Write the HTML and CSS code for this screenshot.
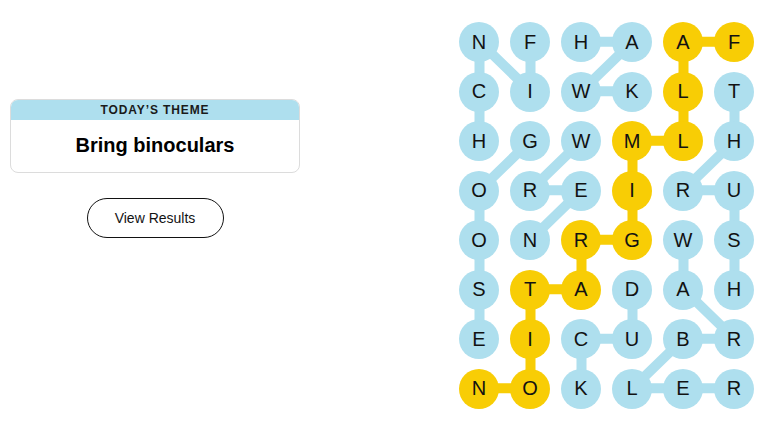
FILE: index.html
```html
<!DOCTYPE html>
<html lang="en">
<head>
<meta charset="utf-8">
<title>Strands</title>
<link rel="stylesheet" href="styles.css">
</head>
<body>
<main class="page">
  <section class="side">
    <div class="theme-card">
      <div class="theme-label">TODAY’S THEME</div>
      <div class="theme-title">Bring binoculars</div>
    </div>
    <button class="results-btn">View Results</button>
  </section>
  <section class="board">
    <svg class="links" width="306" height="396" viewBox="0 0 306 396">
      <g class="found">
        <polyline points="76.5,24.75 76.5,74.25 25.5,24.75 25.5,74.25 25.5,123.75"/>
        <polyline points="127.5,24.75 178.5,24.75 127.5,74.25 178.5,74.25"/>
        <polyline points="280.5,74.25 280.5,123.75 229.5,173.25 280.5,173.25 280.5,222.75 280.5,272.25"/>
        <polyline points="127.5,123.75 76.5,173.25 127.5,173.25 76.5,222.75"/>
        <polyline points="76.5,123.75 25.5,173.25 25.5,222.75 25.5,272.25 25.5,321.75"/>
        <polyline points="178.5,272.25 178.5,321.75 127.5,321.75 127.5,371.25"/>
        <polyline points="229.5,222.75 229.5,272.25 280.5,321.75 229.5,321.75 178.5,371.25 229.5,371.25 280.5,371.25"/>
      </g>
      <g class="span">
        <polyline points="280.5,24.75 229.5,24.75 229.5,74.25 229.5,123.75 178.5,123.75 178.5,173.25 178.5,222.75 127.5,222.75 127.5,272.25 76.5,272.25 76.5,321.75 76.5,371.25 25.5,371.25"/>
      </g>
    </svg>
    <div class="grid">
      <div class="cell"><span>N</span></div>
      <div class="cell"><span>F</span></div>
      <div class="cell"><span>H</span></div>
      <div class="cell"><span>A</span></div>
      <div class="cell gold"><span>A</span></div>
      <div class="cell gold"><span>F</span></div>

      <div class="cell"><span>C</span></div>
      <div class="cell"><span>I</span></div>
      <div class="cell"><span>W</span></div>
      <div class="cell"><span>K</span></div>
      <div class="cell gold"><span>L</span></div>
      <div class="cell"><span>T</span></div>

      <div class="cell"><span>H</span></div>
      <div class="cell"><span>G</span></div>
      <div class="cell"><span>W</span></div>
      <div class="cell gold"><span>M</span></div>
      <div class="cell gold"><span>L</span></div>
      <div class="cell"><span>H</span></div>

      <div class="cell"><span>O</span></div>
      <div class="cell"><span>R</span></div>
      <div class="cell"><span>E</span></div>
      <div class="cell gold"><span>I</span></div>
      <div class="cell"><span>R</span></div>
      <div class="cell"><span>U</span></div>

      <div class="cell"><span>O</span></div>
      <div class="cell"><span>N</span></div>
      <div class="cell gold"><span>R</span></div>
      <div class="cell gold"><span>G</span></div>
      <div class="cell"><span>W</span></div>
      <div class="cell"><span>S</span></div>

      <div class="cell"><span>S</span></div>
      <div class="cell gold"><span>T</span></div>
      <div class="cell gold"><span>A</span></div>
      <div class="cell"><span>D</span></div>
      <div class="cell"><span>A</span></div>
      <div class="cell"><span>H</span></div>

      <div class="cell"><span>E</span></div>
      <div class="cell gold"><span>I</span></div>
      <div class="cell"><span>C</span></div>
      <div class="cell"><span>U</span></div>
      <div class="cell"><span>B</span></div>
      <div class="cell"><span>R</span></div>

      <div class="cell gold"><span>N</span></div>
      <div class="cell gold"><span>O</span></div>
      <div class="cell"><span>K</span></div>
      <div class="cell"><span>L</span></div>
      <div class="cell"><span>E</span></div>
      <div class="cell"><span>R</span></div>
    </div>
  </section>
</main>
</body>
</html>
```
FILE: styles.css
```css
html, body {
  margin: 0;
  padding: 0;
  background: #ffffff;
}

body {
  font-family: "Liberation Sans", Arial, sans-serif;
  color: #000000;
}

.page {
  display: flex;
  align-items: flex-start;
  width: 768px;
  height: 432px;
  overflow: hidden;
}

.side {
  width: 290px;
  padding: 99px 0 0 10px;
  display: flex;
  flex-direction: column;
  align-items: center;
}

.theme-card {
  width: 290px;
  box-sizing: border-box;
  border: 1px solid #dcdcdc;
  border-radius: 8px;
  overflow: hidden;
}

.theme-label {
  background: #aedfee;
  height: 21px;
  line-height: 22px;
  text-align: center;
  font-size: 12px;
  font-weight: 700;
  letter-spacing: 0.9px;
  color: #1a1a1a;
  margin: -1px -1px 0 -1px;
}

.theme-title {
  height: 52px;
  line-height: 50px;
  text-align: center;
  font-size: 20px;
  font-weight: 700;
  color: #000000;
}

.results-btn {
  margin-top: 25px;
  width: 137px;
  height: 40px;
  border: 1px solid #121212;
  border-radius: 20px;
  background: #ffffff;
  font-family: "Liberation Sans", Arial, sans-serif;
  font-size: 14px;
  color: #121212;
  padding: 0;
}

.board {
  position: relative;
  margin: 17.25px 0 0 153.5px;
  width: 306px;
  height: 396px;
}

.links {
  position: absolute;
  left: 0;
  top: 0;
  z-index: 0;
}

.links polyline {
  fill: none;
  stroke-width: 10;
  stroke-linejoin: round;
}

.found polyline {
  stroke: #aedfee;
}

.span polyline {
  stroke: #f8cd05;
}

.grid {
  position: relative;
  z-index: 1;
  display: grid;
  grid-template-columns: repeat(6, 51px);
  grid-template-rows: repeat(8, 49.5px);
}

.cell {
  display: flex;
  align-items: center;
  justify-content: center;
}

.cell span {
  width: 40px;
  height: 40px;
  border-radius: 50%;
  background: #aedfee;
  display: flex;
  align-items: center;
  justify-content: center;
  font-size: 20px;
  color: #121212;
}

.cell.gold span {
  background: #f8cd05;
}
```
